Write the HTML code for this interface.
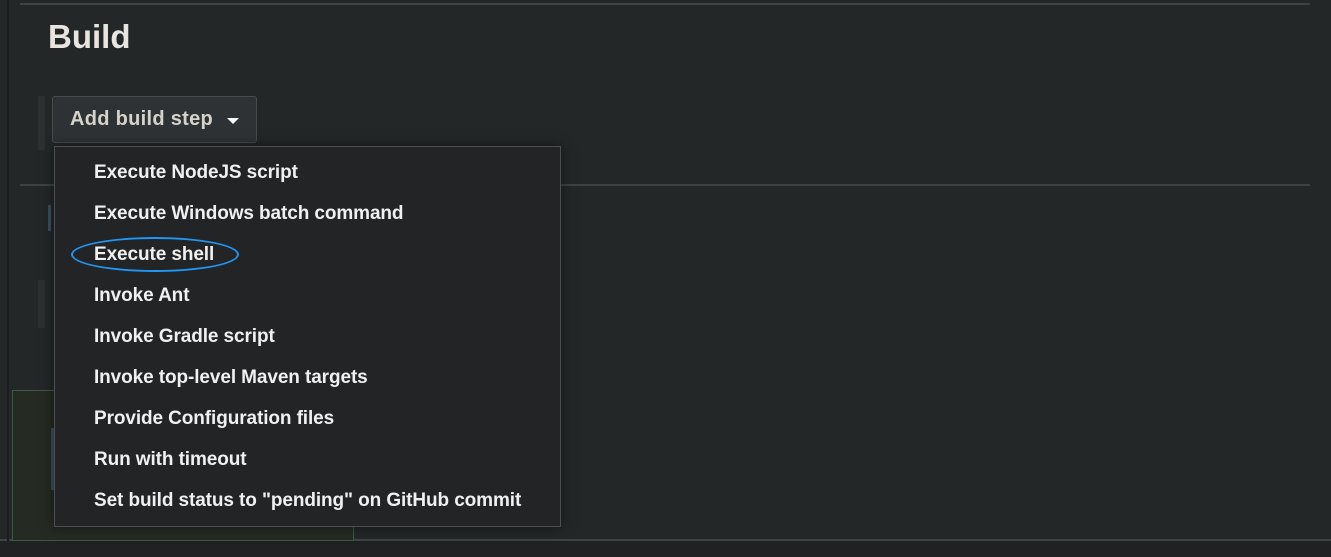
<!DOCTYPE html>
<html><head><style>
body{margin:0;width:1331px;height:557px;background:#232728;position:relative;overflow:hidden;font-family:"Liberation Sans",Arial,sans-serif;}
.a{position:absolute}
</style></head><body>
<div class="a" style="left:0;top:541px;width:1331px;height:16px;background:#1f2122"></div>
<div class="a" style="left:0;top:539px;width:1331px;height:2px;background:#3d4445"></div>
<div class="a" style="left:7px;top:0;width:2px;height:541px;background:#1b1d1e"></div>
<div class="a" style="left:20px;top:3px;width:1290px;height:2px;background:#3d4344"></div>
<div class="a" style="left:20px;top:184px;width:1290px;height:2px;background:#3d4344"></div>
<div class="a" style="left:48px;top:18px;font-size:33px;font-weight:bold;color:#e8e4df">Build</div>
<div class="a" style="left:38px;top:96px;width:7px;height:54px;background:#2c3031"></div>
<div class="a" style="left:38px;top:280px;width:7px;height:48px;background:#2c3031"></div>
<div class="a" style="left:48px;top:205px;width:3px;height:26px;background:#3b4f5e"></div>
<div class="a" style="left:12px;top:390px;width:340px;height:149px;background:#252a22;border:1px solid #3c5a48"></div>
<div class="a" style="left:51px;top:428px;width:3px;height:62px;background:#3b4f5e"></div>
<div class="a" style="left:52px;top:96px;width:205px;height:47px;background:#2e3234;border:1px solid #464c4e;border-radius:3px;box-sizing:border-box"></div>
<div class="a" style="left:70px;top:108px;font-size:20px;font-weight:bold;color:#d6d2cc;letter-spacing:0.3px">Add build step</div>
<div class="a" style="left:227px;top:118px;width:0;height:0;border-left:6px solid transparent;border-right:6px solid transparent;border-top:6px solid #fff"></div>
<div class="a" style="left:54px;top:146px;width:507px;height:381px;background:#222426;border:1px solid #4a5052;box-sizing:border-box;box-shadow:0 0 12px rgba(0,0,0,.5)"></div>
<div class="a" style="left:94px;top:152px;font-size:19px;font-weight:bold;color:#f0f0f0;line-height:41px;letter-spacing:-0.1px">
Execute NodeJS script<br>Execute Windows batch command<br>Execute shell<br>Invoke Ant<br>Invoke Gradle script<br>Invoke top-level Maven targets<br>Provide Configuration files<br>Run with timeout<br>Set build status to "pending" on GitHub commit
</div>
<div class="a" style="left:71px;top:237px;width:164px;height:31px;border:2px solid #2196f3;border-radius:50%"></div>
</body></html>
